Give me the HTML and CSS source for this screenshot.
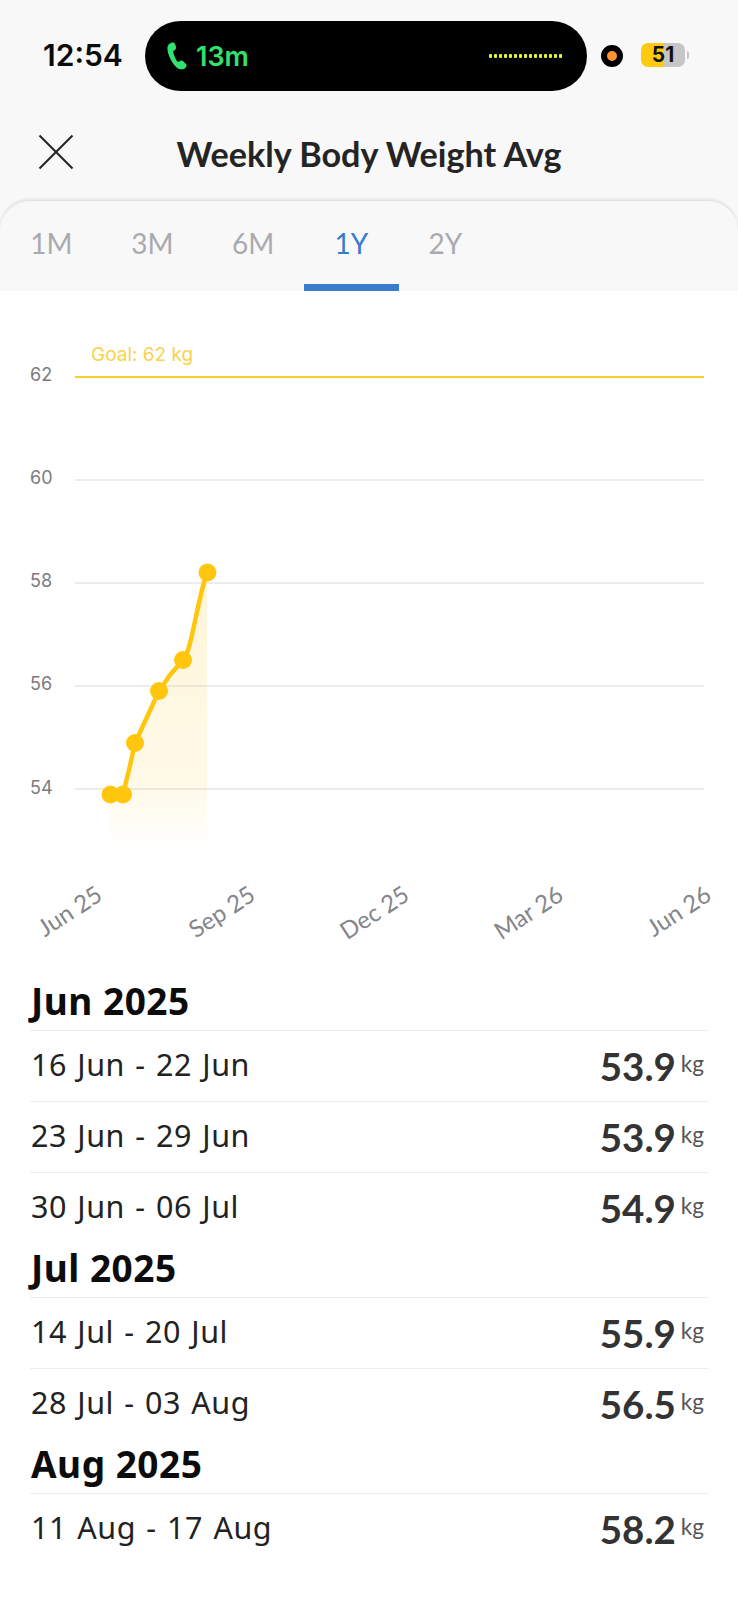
FILE: index.html
```html
<!DOCTYPE html>
<html lang="en">
<head>
<meta charset="utf-8">
<title>Weekly Body Weight Avg</title>
<link rel="stylesheet" href="styles.css">
</head>
<body>
<header class="status">
  <span class="time">12:54</span>
  <div class="island">
    <svg class="phone" viewBox="0 0 24 32" width="22" height="30"><path d="M6 1.500 C3.500 2.500 1.200 4.500 1.500 8 C2 14 5.500 22.500 11 28 C13.500 30.500 17.500 31.500 20.500 29.500 C22.800 28 23 26 21.500 24.500 L18.800 21.800 C17.300 20.500 15.800 20.800 14.500 22 C13.500 22.800 12.500 22.500 11.800 21.300 C10 18.200 8.600 14.800 8 11.800 C7.800 10.500 8.600 10 9.600 9.400 C11 8.500 11.300 7.200 10.800 5.700 L9.800 2.800 C9.200 1.300 7.600 .8 6 1.500 Z"/></svg>
    <span class="call">13m</span>
    <div class="dots"><i></i><i></i><i></i><i></i><i></i><i></i><i></i><i></i><i></i><i></i><i></i><i></i><i></i><i></i><i></i></div>
  </div>
  <span class="cam"></span>
  <div class="battery"><span class="batt-body">51</span><span class="batt-nub"></span></div>
</header>
<nav class="titlebar">
  <svg class="close" viewBox="0 0 36 36" width="36" height="36"><path d="M1.500 1.500 L34.500 34.500 M34.500 1.500 L1.500 34.500"/></svg>
  <h1 class="title">Weekly Body Weight Avg</h1>
</nav>
<div class="tabs">
  <span class="tab">1M</span>
  <span class="tab">3M</span>
  <span class="tab">6M</span>
  <span class="tab tab-active">1Y</span>
  <span class="tab">2Y</span>
</div>
<main class="content">
  <svg class="chart" viewBox="0 291 738 686" width="738" height="686">
    <defs>
      <linearGradient id="fade" x1="0" y1="572" x2="0" y2="850" gradientUnits="userSpaceOnUse">
        <stop offset="0" stop-color="#fdc010" stop-opacity=".16"/>
        <stop offset=".75" stop-color="#fdc010" stop-opacity=".1"/>
        <stop offset="1" stop-color="#fdc010" stop-opacity="0"/>
      </linearGradient>
    </defs>
    <text class="goal-label" x="91" y="361">Goal: 62 kg</text>
    <text class="y-label" x="30" y="381">62</text>
    <text class="y-label" x="30" y="484">60</text>
    <text class="y-label" x="30" y="587">58</text>
    <text class="y-label" x="30" y="690">56</text>
    <text class="y-label" x="30" y="794">54</text>
    <line class="goal-line" x1="75" y1="377" x2="704" y2="377"/>
    <line class="grid" x1="75" y1="480" x2="704" y2="480"/>
    <line class="grid" x1="75" y1="583" x2="704" y2="583"/>
    <line class="grid" x1="75" y1="686" x2="704" y2="686"/>
    <line class="grid" x1="75" y1="789" x2="704" y2="789"/>
    <path fill="url(#fade)" d="M110 794 L123 794 L135 743 L159 691 L183 660 L207 572 L207 850 L110 850 Z"/>
    <path class="trend" d="M110 794 L123 794 L129 770 L135 743 L147 717 L159 691 L170 675 L183 660 C192 650 195 610 207 572"/>
    <g class="points">
      <circle cx="110.500" cy="794.500" r="9"/>
      <circle cx="123" cy="794.500" r="9"/>
      <circle cx="135" cy="743" r="9"/>
      <circle cx="159" cy="691" r="9"/>
      <circle cx="183" cy="660" r="9"/>
      <circle cx="207.500" cy="572.500" r="9"/>
    </g>
    <text class="x-label" text-anchor="end" transform="translate(104 899) rotate(-33)">Jun 25</text>
    <text class="x-label" text-anchor="end" transform="translate(257 899) rotate(-33)">Sep 25</text>
    <text class="x-label" text-anchor="end" transform="translate(411 899) rotate(-33)">Dec 25</text>
    <text class="x-label" text-anchor="end" transform="translate(565 899) rotate(-33)">Mar 26</text>
    <text class="x-label" text-anchor="end" transform="translate(713 899) rotate(-33)">Jun 26</text>
  </svg>
  <section class="list">
    <h2 class="month">Jun 2025</h2>
    <div class="row"><span class="range">16 Jun - 22 Jun</span><span class="value">53.9<small class="unit">kg</small></span></div>
    <div class="row"><span class="range">23 Jun - 29 Jun</span><span class="value">53.9<small class="unit">kg</small></span></div>
    <div class="row"><span class="range">30 Jun - 06 Jul</span><span class="value">54.9<small class="unit">kg</small></span></div>
    <h2 class="month">Jul 2025</h2>
    <div class="row"><span class="range">14 Jul - 20 Jul</span><span class="value">55.9<small class="unit">kg</small></span></div>
    <div class="row"><span class="range">28 Jul - 03 Aug</span><span class="value">56.5<small class="unit">kg</small></span></div>
    <h2 class="month">Aug 2025</h2>
    <div class="row"><span class="range">11 Aug - 17 Aug</span><span class="value">58.2<small class="unit">kg</small></span></div>
  </section>
</main>
</body>
</html>
```
FILE: styles.css
```css
* { box-sizing: border-box; }
html, body { margin: 0; padding: 0; }
body {
  width: 738px;
  height: 1600px;
  overflow: hidden;
  background: #f8f8f8;
  font-family: "Lato", "Noto Sans", sans-serif;
  color: #222;
}
.status {
  height: 112px;
  padding: 21px 0 0 43px;
  display: flex;
  align-items: flex-start;
}
.time {
  width: 102px;
  height: 70px;
  font: 600 30px/68px "Inter", sans-serif;
  color: #0b0b0b;
}
.island {
  width: 442px;
  height: 70px;
  background: #000;
  border-radius: 35px;
  display: flex;
  align-items: center;
  padding-left: 21px;
}
.phone { fill: #31e26d; margin-right: 8px; }
.call {
  font: 600 27px/1 "Inter", sans-serif;
  color: #31e26d;
}
.dots {
  margin-left: auto;
  margin-right: 25px;
  display: flex;
  gap: 1.500px;
}
.dots i {
  width: 3.500px;
  height: 4px;
  background: #e8f72c;
  border-radius: 1px;
}
.cam {
  margin: 24px 0 0 14px;
  width: 22px;
  height: 22px;
  border-radius: 50%;
  background: #ff9330;
  border: 6px solid #000;
}
.battery {
  margin: 22px 0 0 18px;
  display: flex;
  align-items: center;
  gap: 2px;
}
.batt-body {
  width: 44px;
  height: 24px;
  border-radius: 7px;
  background: linear-gradient(90deg, #fdca0f 0 50%, #c6c6c6 50% 100%);
  font: 700 21px/24px "Inter", sans-serif;
  color: #111;
  text-align: center;
}
.batt-nub {
  width: 2px;
  height: 8px;
  background: #c6c6c6;
  border-radius: 0 2px 2px 0;
}
.titlebar {
  height: 89px;
  position: relative;
  display: flex;
  justify-content: center;
  align-items: center;
}
.close {
  position: absolute;
  left: 38px;
  top: 22px;
  fill: none;
  stroke: #222;
  stroke-width: 2;
}
.title {
  margin: 0 0 7px;
  font-size: 34.200px;
  font-weight: 700;
  color: #242424;
}
.tabs {
  height: 90px;
  display: flex;
  padding-left: 1px;
  background: #f8f8f8;
  border-radius: 30px 30px 0 0;
  box-shadow: 0 -2px 3px rgba(0, 0, 0, .1);
}
.tab {
  padding: 24px 29.300px 0;
  font-size: 28px;
  line-height: 36px;
  color: #a9aaae;
}
.tab-active {
  padding: 24px 31px 0;
  color: #3a7bc8;
  border-bottom: 7px solid #3a7bcb;
}
.content {
  background: #fff;
  height: 1309px;
  position: relative;
}
.chart { display: block; }
.goal-label { font: 19px "Inter", sans-serif; fill: #f9d24e; }
.y-label { font: 18px "Inter", sans-serif; fill: #7b7b7f; }
.x-label { font: 24px "Lato", sans-serif; fill: #85858a; }
.goal-line { stroke: #ffcc2e; stroke-width: 2; }
.grid { stroke: #e6e6e8; stroke-width: 1.500; }
.trend { fill: none; stroke: #ffc60d; stroke-width: 4.500; }
.points circle { fill: #ffc60d; }
.list { padding: 0 30px; }
.month {
  margin: 0;
  height: 54px;
  padding-left: 1px;
  font-family: "Noto Sans", sans-serif;
  font-size: 37px;
  letter-spacing: .5px;
  line-height: 48px;
  font-weight: 700;
  color: #0c0c0c;
  border-bottom: 1px solid #ececec;
}
.row {
  height: 71px;
  display: flex;
  justify-content: space-between;
  padding-top: 12px;
  border-bottom: 1px solid #ececec;
}
.row:last-child, .row:has(+ .month) { border-bottom: 0; }
.range {
  font-family: "Noto Sans", sans-serif;
  font-size: 30.500px;
  letter-spacing: .5px;
  word-spacing: 2px;
  line-height: 42px;
  padding-left: 1px;
  color: #222;
}
.value {
  font-size: 38.500px;
  line-height: 46px;
  font-weight: 700;
  color: #333;
  padding-right: 4px;
  display: flex;
  align-items: flex-start;
}
.unit {
  margin-left: 5px;
  font-size: 22.500px;
  line-height: 42px;
  font-weight: 400;
  color: #555;
}
```
